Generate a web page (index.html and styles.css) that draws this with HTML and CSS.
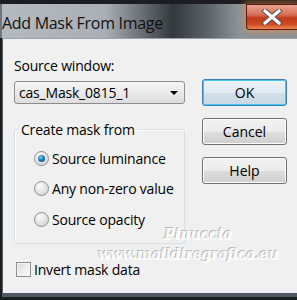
FILE: index.html
```html
<!DOCTYPE html>
<html lang="en">
<head>
    <meta charset="UTF-8">
    <meta name="viewport" content="width=device-width, initial-scale=1.0">
    <title>Add Mask From Image</title>
    <link rel="stylesheet" href="styles.css">
</head>
<body>
    <div class="window">
        <div class="titlebar">
            <span class="title">Add Mask From Image</span>
            <div class="close">
                <svg width="22" height="16" viewBox="0 0 22 16">
                    <path d="M4 2 L18 14 M18 2 L4 14" stroke="#555" stroke-width="5" stroke-linecap="square"/>
                    <path d="M4 2 L18 14 M18 2 L4 14" stroke="#fff" stroke-width="3" stroke-linecap="square"/>
                </svg>
            </div>
        </div>

        <div class="client">
            <div class="main">
                <div class="left">
                    <div class="label">Source window:</div>
                    <div class="select">
                        <span>cas_Mask_0815_1</span>
                        <span class="arrow"></span>
                    </div>

                    <fieldset class="group">
                        <legend>Create mask from</legend>
                        <div class="radio checked"><span class="dot"></span>Source luminance</div>
                        <div class="radio"><span class="dot"></span>Any non-zero value</div>
                        <div class="radio"><span class="dot"></span>Source opacity</div>
                    </fieldset>

                    <div class="check"><span class="box"></span>Invert mask data</div>
                </div>

                <div class="buttons">
                    <div class="btn default">OK</div>
                    <div class="btn">Cancel</div>
                    <div class="btn">Help</div>
                </div>
            </div>

            <div class="watermark">
                <div class="wm1">Pinuccia</div>
                <div class="wm2">www.maildiregrafica.eu</div>
            </div>
        </div>
    </div>
</body>
</html>
```

FILE: styles.css
```css
body {
    margin: 0;
    background: #1b1d20;
    font-family: "Open Sans", "Noto Sans", sans-serif;
    color: #000;
}
.window {
    width: 297px;
    height: 300px;
    padding-top: 4px;
    box-sizing: border-box;
    background: #1b1d20;
}
.titlebar {
    height: 34px;
    position: relative;
    background: linear-gradient(90deg, #b4babf 0%, #a9afb4 35%, #5b6166 50%, #33383d 58%, #5d646a 70%, #8c9398 80%, #8a9196 100%);
    border-left: 2px solid #6f767c;
}
.title {
    display: inline-block;
    padding: 8px 0 0 0;
    font-size: 16px;
    letter-spacing: -0.3px;
    color: #111;
}
.close {
    position: absolute;
    right: 0;
    top: 0;
    width: 50px;
    height: 24px;
    border: 1px solid #5a1a10;
    border-right: none;
    border-radius: 0 0 0 4px;
    background: linear-gradient(180deg, #e9a392 0%, #d76f58 40%, #c23a1c 55%, #cf4a23 80%, #e98a4c 100%);
    box-shadow: 0 0 6px 2px rgba(255, 140, 60, 0.55);
    display: flex;
    align-items: center;
    justify-content: center;
}
.client {
    position: relative;
    height: 254px;
    margin: 0 0 0 2px;
    background: #f0f0f0;
    border-top: 1px solid #a0a4a8;
    border-left: 1px solid #5b6166;
    border-bottom: 4px solid #4f5a66;
    font-size: 14px;
}
.main {
    display: flex;
    padding: 17px 0 0 11px;
}
.left {
    width: 171px;
}
.label {
    height: 20px;
    line-height: 20px;
    letter-spacing: -0.2px;
}
.select {
    margin-top: 5px;
    height: 21px;
    border: 1px solid #8d8d8d;
    border-radius: 3px;
    background: linear-gradient(180deg, #f4f4f4 0%, #ebebeb 50%, #dddddd 100%);
    display: flex;
    align-items: center;
    justify-content: space-between;
    padding: 0 5px 0 4px;
    letter-spacing: -0.2px;
}
.arrow {
    width: 0;
    height: 0;
    border-left: 4px solid transparent;
    border-right: 4px solid transparent;
    border-top: 4px solid #000;
    margin-right: 1px;
}
.group {
    margin: 16px 0 0 0;
    padding: 4px 0 8px 0;
    border: 1px solid #d5dfe5;
    border-radius: 3px;
    box-shadow: inset 1px 1px 0 #fff;
}
.group legend {
    padding: 0 2px;
    margin-left: 4px;
    letter-spacing: -0.2px;
}
.radio {
    display: flex;
    align-items: center;
    height: 30.5px;
    padding-left: 19px;
    letter-spacing: -0.2px;
}
.dot {
    width: 15px;
    height: 15px;
    border-radius: 50%;
    border: 1px solid #8e8f8f;
    background: radial-gradient(circle at 35% 30%, #fbfbfb 0%, #e4e4e4 50%, #cfcfcf 100%);
    margin-right: 3px;
    box-sizing: border-box;
    position: relative;
}
.radio.checked .dot::after {
    content: "";
    position: absolute;
    left: 3px;
    top: 3px;
    width: 7px;
    height: 7px;
    border-radius: 50%;
    background: radial-gradient(circle at 40% 35%, #7ad0f4 0%, #1e76b4 50%, #0a3f6e 100%);
}
.check {
    display: flex;
    align-items: center;
    height: 20px;
    margin-top: 16px;
    margin-left: 2px;
    letter-spacing: -0.2px;
}
.box {
    width: 13px;
    height: 13px;
    border: 1px solid #8e8f8f;
    background: linear-gradient(135deg, #d8d8d8 0%, #f0f0f0 60%, #fdfdfd 100%);
    box-shadow: inset 0 0 0 1px #f4f4f4;
    margin-right: 3px;
}
.buttons {
    margin-left: 17px;
    margin-top: 23px;
    display: flex;
    flex-direction: column;
    gap: 12px;
}
.btn {
    width: 83px;
    height: 25px;
    border: 1px solid #707070;
    border-radius: 3px;
    background: linear-gradient(180deg, #f2f2f2 0%, #ebebeb 50%, #dddddd 51%, #cfcfcf 100%);
    box-shadow: inset 0 0 0 1px #fcfcfc;
    display: flex;
    align-items: center;
    justify-content: center;
}
.btn.default {
    border-color: #3c7fb1;
    background: linear-gradient(180deg, #eef4f8 0%, #e0eaf1 50%, #d3e0ea 51%, #c8d8e4 100%);
    box-shadow: inset 0 0 0 1px #48c6f5;
}
.watermark {
    position: absolute;
    left: 95px;
    top: 187px;
    color: #f7f7f7;
    font-family: "DejaVu Serif", serif;
    font-weight: bold;
    font-style: italic;
    text-shadow: -1px -1px 0 #b8b8b8, 1px 1px 0 #ffffff;
    text-align: center;
}
.wm1 {
    font-size: 14px;
    margin-left: 20px;
}
.wm2 {
    font-size: 14px;
    margin-top: 4px;
    letter-spacing: -0.2px;
}
```
